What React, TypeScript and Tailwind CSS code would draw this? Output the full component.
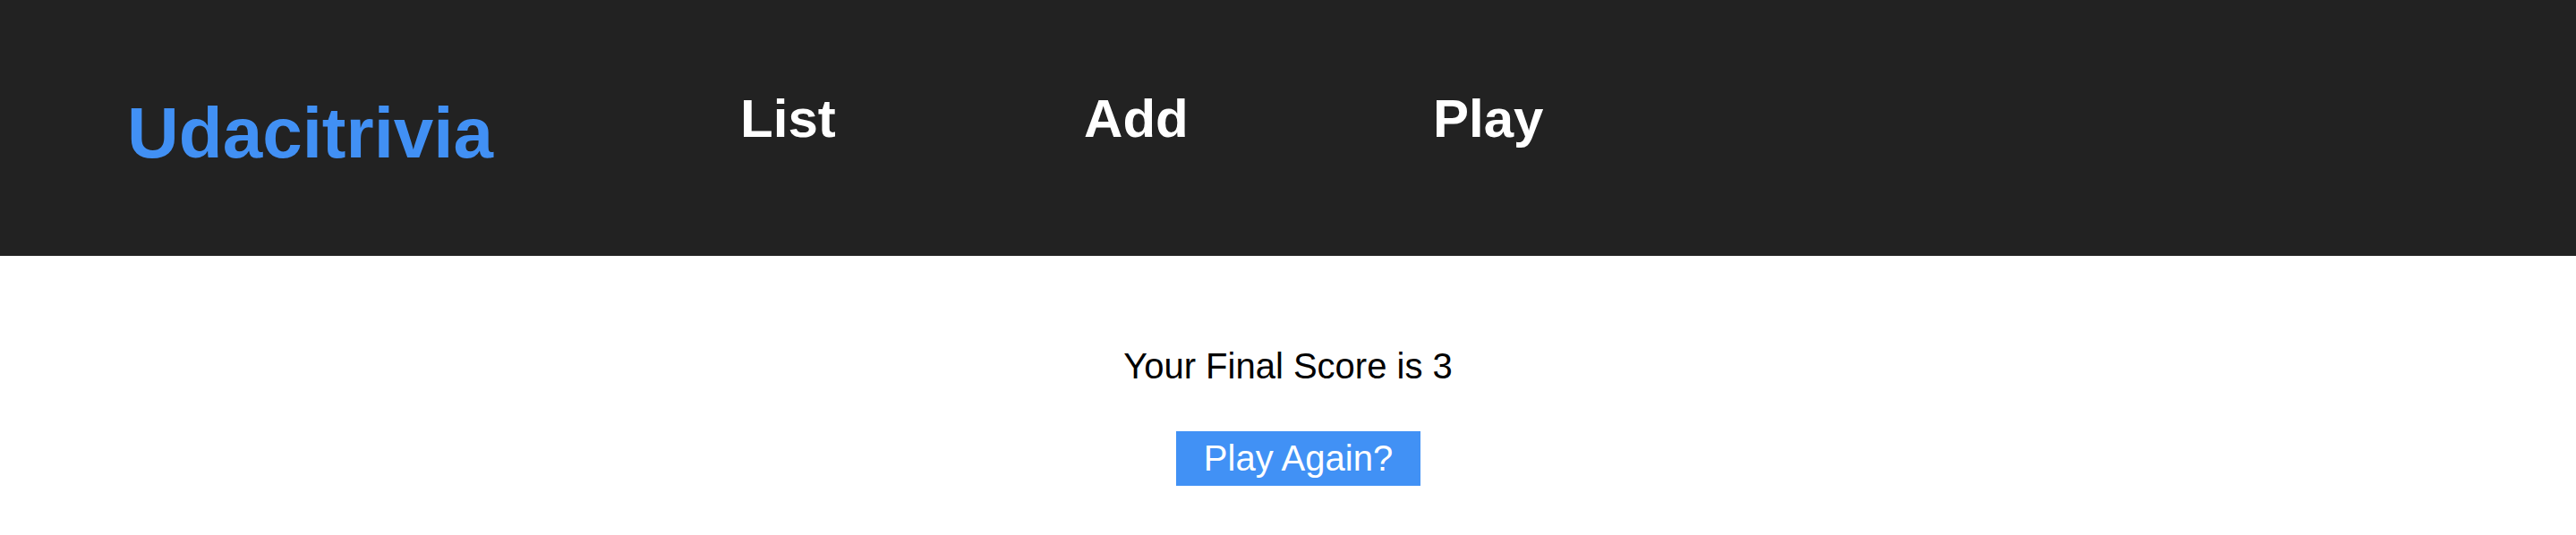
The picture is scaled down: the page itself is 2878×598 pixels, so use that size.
export default function App() {
  return (
    <div className="min-h-screen bg-white" style={{ fontFamily: '"Liberation Sans", Arial, sans-serif' }}>
      <header className="flex h-[286px] items-start bg-[#222222] pl-[142px]">
        <div className="mt-[109px] text-[80px] font-bold leading-none text-[#4190f4]">Udacitrivia</div>
        <nav className="ml-[276px] mt-[103px] flex text-[60px] font-bold leading-none text-white">
          <div className="w-[384px]">List</div>
          <div className="w-[390px]">Add</div>
          <div>Play</div>
        </nav>
      </header>
      <main className="flex flex-col items-center pt-[100px] text-black">
        <div className="text-[40px] leading-[46px]">Your Final Score is 3</div>
        <button className="mt-[50px] ml-[23px] bg-[#4191f5] px-[31px] pt-[7px] pb-[8px] text-[40px] leading-[46px] text-white">
          Play Again?
        </button>
      </main>
    </div>
  );
}
